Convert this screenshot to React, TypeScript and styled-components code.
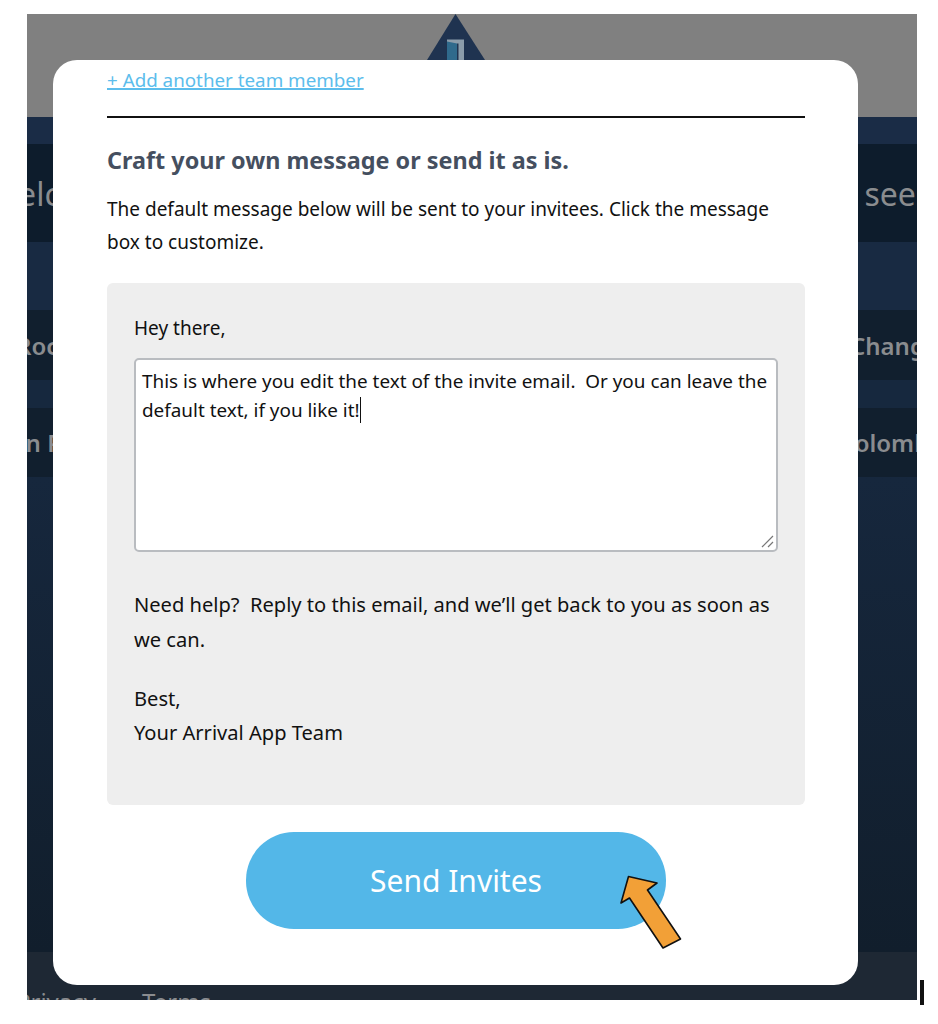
import styled, { createGlobalStyle } from 'styled-components'

const FONT = '"Noto Sans", "Open Sans", sans-serif'

const GlobalStyle = createGlobalStyle`
  html, body {
    margin: 0;
    padding: 0;
    background: #fff;
  }
  body {
    font-family: ${FONT};
    color: #111;
  }
`

const Page = styled.div`
  display: flex;
  align-items: flex-end;
  width: 938px;
  height: 1024px;
  padding: 14px 0 24px 27px;
  box-sizing: border-box;
`

const Backdrop = styled.div`
  position: relative;
  display: flex;
  flex-direction: column;
  flex: none;
  width: 890px;
  height: 986px;
  overflow: hidden;
  background: #16263b;
  font-size: 32px;
  color: #8a8c8f;
`

const TopBar = styled.div`
  display: flex;
  justify-content: center;
  height: 103px;
  padding-right: 33px;
  box-sizing: border-box;
  background: #808080;
`

const Logo = styled.svg`
  width: 60px;
  height: 46px;
`

const Band = styled.div<{ $height: number; $bg: string; $size?: number }>`
  display: flex;
  justify-content: space-between;
  align-items: center;
  height: ${({ $height }) => $height}px;
  background: ${({ $bg }) => $bg};
  font-size: ${({ $size }) => $size ?? 24}px;
  font-weight: ${({ $size }) => ($size ? 400 : 600)};
  white-space: nowrap;
`

const BandLeft = styled.span<{ $shift: number }>`
  margin-left: ${({ $shift }) => $shift}px;
`

const BandRight = styled.span<{ $shift: number }>`
  margin-right: ${({ $shift }) => $shift}px;
`

const Fill = styled.div`
  flex: 1;
  background: linear-gradient(#16273d, #111e2c);
`

const Footer = styled.div`
  display: flex;
  gap: 46px;
  height: 48px;
  padding: 35px 0 0 0;
  margin-left: -11px;
  box-sizing: border-box;
  background: #1e2834;
  font-size: 24px;
  line-height: 30px;
`

const Modal = styled.div`
  position: absolute;
  left: 26px;
  top: 46px;
  width: 805px;
  height: 925px;
  padding: 0 53px 0 54px;
  box-sizing: border-box;
  background: #fff;
  border-radius: 24px;
  color: #111;
`

const AddLink = styled.a`
  display: block;
  padding-top: 4px;
  font-size: 18.8px;
  line-height: 32px;
  color: #5cbdec;
  text-decoration: underline;
  text-decoration-thickness: 2px;
`

const Divider = styled.hr`
  height: 2px;
  margin: 20px 0 0;
  border: 0;
  background: #111;
`

const Heading = styled.h2`
  margin: 26px 0 0;
  font-size: 23.4px;
  line-height: 32px;
  font-weight: 700;
  color: #454f5f;
`

const Intro = styled.p`
  margin: 17px 0 0;
  font-size: 19px;
  line-height: 33px;
`

const Panel = styled.div`
  margin-top: 24px;
  height: 522px;
  padding: 28px 27px 0;
  box-sizing: border-box;
  background: #eee;
  border-radius: 6px;
  font-size: 20.1px;
`

const Greeting = styled.p`
  margin: 0;
  font-size: 19px;
  line-height: 34px;
`

const MessageBox = styled.div`
  position: relative;
  height: 194px;
  margin-top: 13px;
  padding: 7px 2px 6px 6px;
  box-sizing: border-box;
  background: #fff;
  border: 2px solid #b9bcc0;
  border-radius: 5px;
  font-size: 18.9px;
  line-height: 29px;
  white-space: pre-wrap;
`

const Caret = styled.span`
  display: inline-block;
  width: 1px;
  height: 26px;
  vertical-align: -6px;
  background: #111;
`

const Grip = styled.svg`
  position: absolute;
  right: 2px;
  bottom: 2px;
  width: 14px;
  height: 14px;
`

const Help = styled.p`
  margin: 35px 0 0;
  line-height: 35px;
  white-space: pre-wrap;
`

const SignOff = styled.p`
  margin: 25px 0 0;
  line-height: 34px;
`

const ButtonRow = styled.div`
  position: relative;
  display: flex;
  justify-content: center;
  margin-top: 27px;
`

const SendButton = styled.button`
  width: 420px;
  height: 97px;
  border: 0;
  border-radius: 48px;
  background: #53b7e8;
  color: #fff;
  font-family: ${FONT};
  font-size: 30px;
`

const Arrow = styled.svg`
  position: absolute;
  left: 512.5px;
  top: 40.5px;
  width: 64px;
  height: 76px;
`

const CursorMark = styled.div`
  flex: none;
  width: 4px;
  height: 25px;
  margin: 0 0 -5px 3px;
  background: #111;
`

const App = () => {
  return (
    <Page>
      <GlobalStyle />
      <Backdrop>
        <TopBar>
          <Logo viewBox="0 0 60 46">
            <path d="M29.5 0L1 46h58z" fill="#1f3350" />
            <path d="M21 25.5h17V46H21z" fill="#8b9caa" />
            <path d="M21 27.5l10 2V46H21z" fill="#2f6a8c" />
            <path d="M31 29.5h1.5V46H31z" fill="#1f3350" />
          </Logo>
        </TopBar>
        <Band $height={27} $bg="#1a2c46" />
        <Band $height={98} $bg="#0d1c2c" $size={32}>
          <BandLeft $shift={-38}>Welcome</BandLeft>
          <BandRight $shift={-27}>see it</BandRight>
        </Band>
        <Band $height={68} $bg="#182a42" />
        <Band $height={70} $bg="#111f2e">
          <BandLeft $shift={-11}>Rock</BandLeft>
          <BandRight $shift={-22}>Change</BandRight>
        </Band>
        <Band $height={28} $bg="#16283e" />
        <Band $height={69} $bg="#111f2e">
          <BandLeft $shift={-37}>Plan Plan</BandLeft>
          <BandRight $shift={-33}>Colombia</BandRight>
        </Band>
        <Fill />
        <Footer>
          <span>Privacy</span>
          <span>Terms</span>
        </Footer>
        <Modal>
          <AddLink>+ Add another team member</AddLink>
          <Divider />
          <Heading>Craft your own message or send it as is.</Heading>
          <Intro>
            The default message below will be sent to your invitees. Click the
            message box to customize.
          </Intro>
          <Panel>
            <Greeting>Hey there,</Greeting>
            <MessageBox role="textbox">
              {'This is where you edit the text of the invite email.  Or you can leave the default text, if you like it!'}
              <Caret />
              <Grip viewBox="0 0 14 14">
                <path d="M2 13L13 2M8 13l5-5" stroke="#777" strokeWidth="1.2" />
              </Grip>
            </MessageBox>
            <Help>
              {'Need help?  Reply to this email, and we’ll get back to you as soon as we can.'}
            </Help>
            <SignOff>
              Best,
              <br />
              Your Arrival App Team
            </SignOff>
          </Panel>
          <ButtonRow>
            <SendButton>Send Invites</SendButton>
            <Arrow viewBox="0 0 64 76">
              <path
                d="M8.5 3.5L37 10L27.5 17L60.5 66L43 75L9.5 25L1 30z"
                fill="#f2a037"
                stroke="#111"
                strokeWidth="1.6"
                strokeLinejoin="round"
              />
            </Arrow>
          </ButtonRow>
        </Modal>
      </Backdrop>
      <CursorMark />
    </Page>
  )
}

export default App
